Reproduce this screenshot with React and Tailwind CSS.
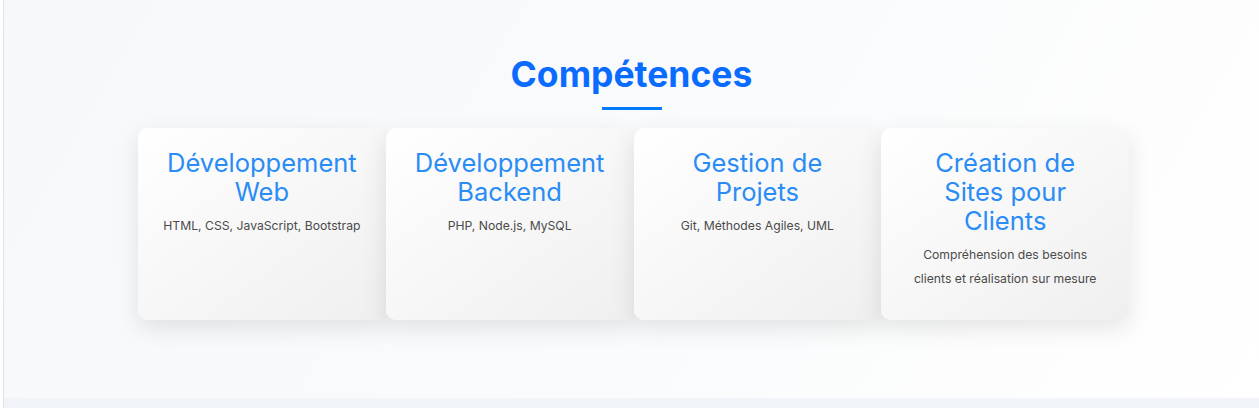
export default function App() {
  const cards = [
    { title: "Développement Web", desc: "HTML, CSS, JavaScript, Bootstrap" },
    { title: "Développement Backend", desc: "PHP, Node.js, MySQL" },
    { title: "Gestion de Projets", desc: "Git, Méthodes Agiles, UML" },
    {
      title: "Création de Sites pour Clients",
      desc: "Compréhension des besoins clients et réalisation sur mesure",
    },
  ];
  return (
    <div
      className="flex h-[408px] w-full overflow-hidden bg-white"
      style={{ fontFamily: "Inter, 'Noto Sans', sans-serif" }}
    >
      <div className="w-[3px] shrink-0 bg-white" />
      <div className="flex-1 flex flex-col border-l border-[#e3e3e3]">
        <section className="h-[398px] bg-[linear-gradient(120deg,#f7f8f9_0%,#fafbfc_60%,#ffffff_100%)] flex flex-col items-center pt-[54px]">
          <h2 className="text-[35.5px] leading-[41px] font-bold text-[#0a6cff]">
            Compétences
          </h2>
          <div className="mt-[12px] h-[3px] w-[60px] bg-[#007bff]" />
          <div className="mt-[18px] grid grid-cols-4 w-[991px] ml-[4px]">
            {cards.map((c) => (
              <div
                key={c.title}
                className="h-[192px] rounded-[10px] bg-[linear-gradient(145deg,#ffffff,#efefef)] shadow-[0_8px_24px_rgba(0,0,0,0.1)] px-[24px] pt-[20px] text-center"
              >
                <h3 className="text-[25.5px] leading-[29px] font-normal text-[#2a8cf5]">
                  {c.title}
                </h3>
                <p className="mt-[8px] text-[12.2px] leading-[24px] text-[#4a4a4a]">
                  {c.desc}
                </p>
              </div>
            ))}
          </div>
        </section>
        <div className="flex-1 bg-[#f1f4f9]" />
      </div>
    </div>
  );
}
